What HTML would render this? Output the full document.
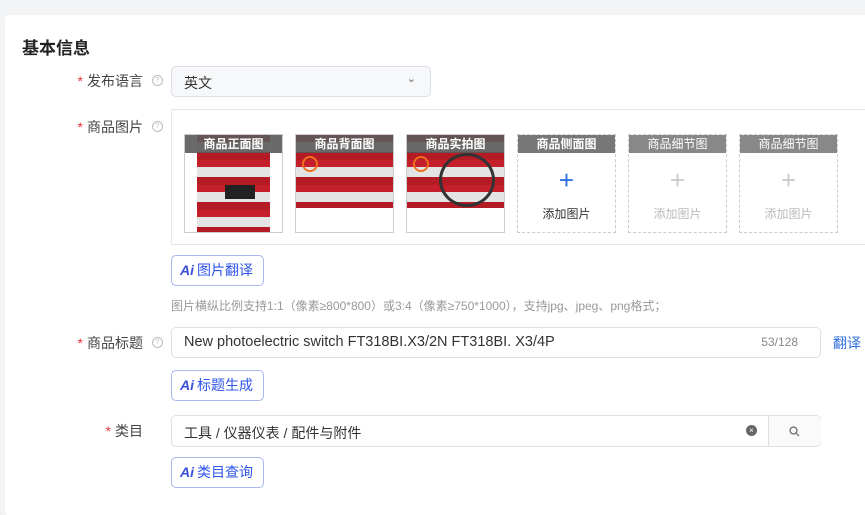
<!DOCTYPE html>
<html><head><meta charset="utf-8"><style>
body{margin:0;width:865px;height:503px;overflow:hidden;background:#f3f4f6;font-family:"Liberation Sans","Noto Sans CJK SC",sans-serif;position:relative}
.card{position:absolute;left:5px;top:15px;width:870px;height:500px;background:#fff;border-radius:4px}
.a{position:absolute}
.lbl{position:absolute;font-size:14px;color:#444;text-align:right;width:140px;left:3px}
.lbl b{color:#e4393c;font-weight:normal;margin-right:4px}
.q{position:absolute;width:9px;height:9px;border:1px solid #bbb;border-radius:50%;font-size:7px;color:#bbb;text-align:center;line-height:9px}
.inp{position:absolute;border:1px solid #dcdfe6;border-radius:5px;box-sizing:border-box;font-size:14px;color:#333}
.btn{position:absolute;left:171px;width:93px;height:31px;border:1px solid #a9b7ec;border-radius:5px;box-sizing:border-box;color:#2f54eb;font-size:14px;line-height:29px;padding-left:8px}
.btn i{font-style:italic;font-weight:bold;color:#3a50d9;margin-right:3px;font-family:"Liberation Sans",sans-serif}
.th{position:absolute;top:134px;width:99px;height:99px;box-sizing:border-box;border:1px solid #ccc;overflow:hidden}
.ph{position:absolute;left:0;top:0;right:0;bottom:10px;background:repeating-linear-gradient(180deg,#c41f2a 0 7px,#e4e4e4 7px 17px,#b51b25 17px 25px)}
.hd{position:absolute;left:0;right:0;top:0;height:18px;background:rgba(90,90,90,.9);color:#fff;font-size:12px;text-align:center;line-height:18px;font-weight:bold}
.em{border:1px dashed #ccc}
.em .hd{background:#777}
.pl{position:absolute;left:0;right:0;top:30px;text-align:center;font-size:26px;color:#2f6fe0;font-weight:300}
.tx{position:absolute;left:0;right:0;top:70px;text-align:center;font-size:12px;color:#333}
.dis .pl{color:#ccc}.dis .tx{color:#bbb}.dis .hd{background:#888;font-weight:normal}
.oc{position:absolute;left:6px;top:21px;width:12px;height:12px;border:2px solid #f07020;border-radius:50%}
</style></head><body>
<div class="card"></div>
<div class="a" style="left:22px;top:34px;font-size:17px;font-weight:bold;color:#222">基本信息</div>

<div class="lbl" style="top:71px"><b>*</b>发布语言</div><div class="q" style="left:152px;top:75px">?</div>
<div class="inp" style="left:171px;top:66px;width:260px;height:31px;background:#f7f8fa;padding:6px 12px">英文<span class="a" style="right:14px;top:5px;color:#666;font-size:11px">⌄</span></div>

<div class="lbl" style="top:117px"><b>*</b>商品图片</div><div class="q" style="left:152px;top:121px">?</div>
<div class="a" style="left:171px;top:109px;width:700px;height:136px;border:1px solid #e4e6eb;box-sizing:border-box"></div>
<div class="th" style="left:184px"><div class="ph" style="left:12px;right:12px;bottom:0"></div><div class="a" style="left:40px;top:50px;width:30px;height:14px;background:#222"></div><div class="hd">商品正面图</div></div>
<div class="th" style="left:295px"><div class="ph" style="bottom:24px"></div><div class="oc"></div><div class="hd">商品背面图</div></div>
<div class="th" style="left:406px"><div class="ph" style="bottom:24px"></div><div class="oc"></div><div class="a" style="left:32px;top:18px;width:50px;height:48px;border:3px solid #333;border-radius:50%"></div><div class="hd">商品实拍图</div></div>
<div class="th em" style="left:517px"><div class="hd">商品侧面图</div><div class="pl">+</div><div class="tx">添加图片</div></div>
<div class="th em dis" style="left:628px"><div class="hd">商品细节图</div><div class="pl">+</div><div class="tx">添加图片</div></div>
<div class="th em dis" style="left:739px"><div class="hd">商品细节图</div><div class="pl">+</div><div class="tx">添加图片</div></div>

<div class="btn" style="top:255px"><i>Ai</i>图片翻译</div>
<div class="a" style="left:171px;top:297px;font-size:12px;color:#999">图片横纵比例支持1:1（像素≥800*800）或3:4（像素≥750*1000），支持jpg、jpeg、png格式；</div>

<div class="lbl" style="top:333px"><b>*</b>商品标题</div><div class="q" style="left:152px;top:337px">?</div>
<div class="inp" style="left:171px;top:327px;width:650px;height:31px;padding:0 12px;line-height:29px;font-size:14.5px">New photoelectric switch FT318BI.X3/2N FT318BI. X3/4P<span class="a" style="right:22px;top:0;line-height:29px;font-size:12px;color:#888">53/128</span></div>
<div class="a" style="left:833px;top:333px;font-size:14px;color:#2f6fe0">翻译</div>
<div class="btn" style="top:370px"><i>Ai</i>标题生成</div>

<div class="lbl" style="top:421px"><b>*</b>类目</div>
<div class="inp" style="left:171px;top:415px;width:650px;height:32px;padding:7px 12px">工具 / 仪器仪表 / 配件与附件
<span class="a" style="left:574px;top:9px;width:11px;height:11px;border-radius:50%;background:#666;color:#fff;font-size:8px;text-align:center;line-height:11px">×</span>
<span class="a" style="left:596px;top:0;width:52px;height:30px;border-left:1px solid #dcdfe6;background:#fafafa;border-radius:0 5px 5px 0"><svg class="a" style="left:20px;top:10px" width="11" height="11" viewBox="0 0 11 11"><circle cx="4.5" cy="4.5" r="3.5" fill="none" stroke="#666" stroke-width="1.2"/><path d="M7 7l3 3" stroke="#666" stroke-width="1.2"/></svg></span></div>
<div class="btn" style="top:457px"><i>Ai</i>类目查询</div>
</body></html>
